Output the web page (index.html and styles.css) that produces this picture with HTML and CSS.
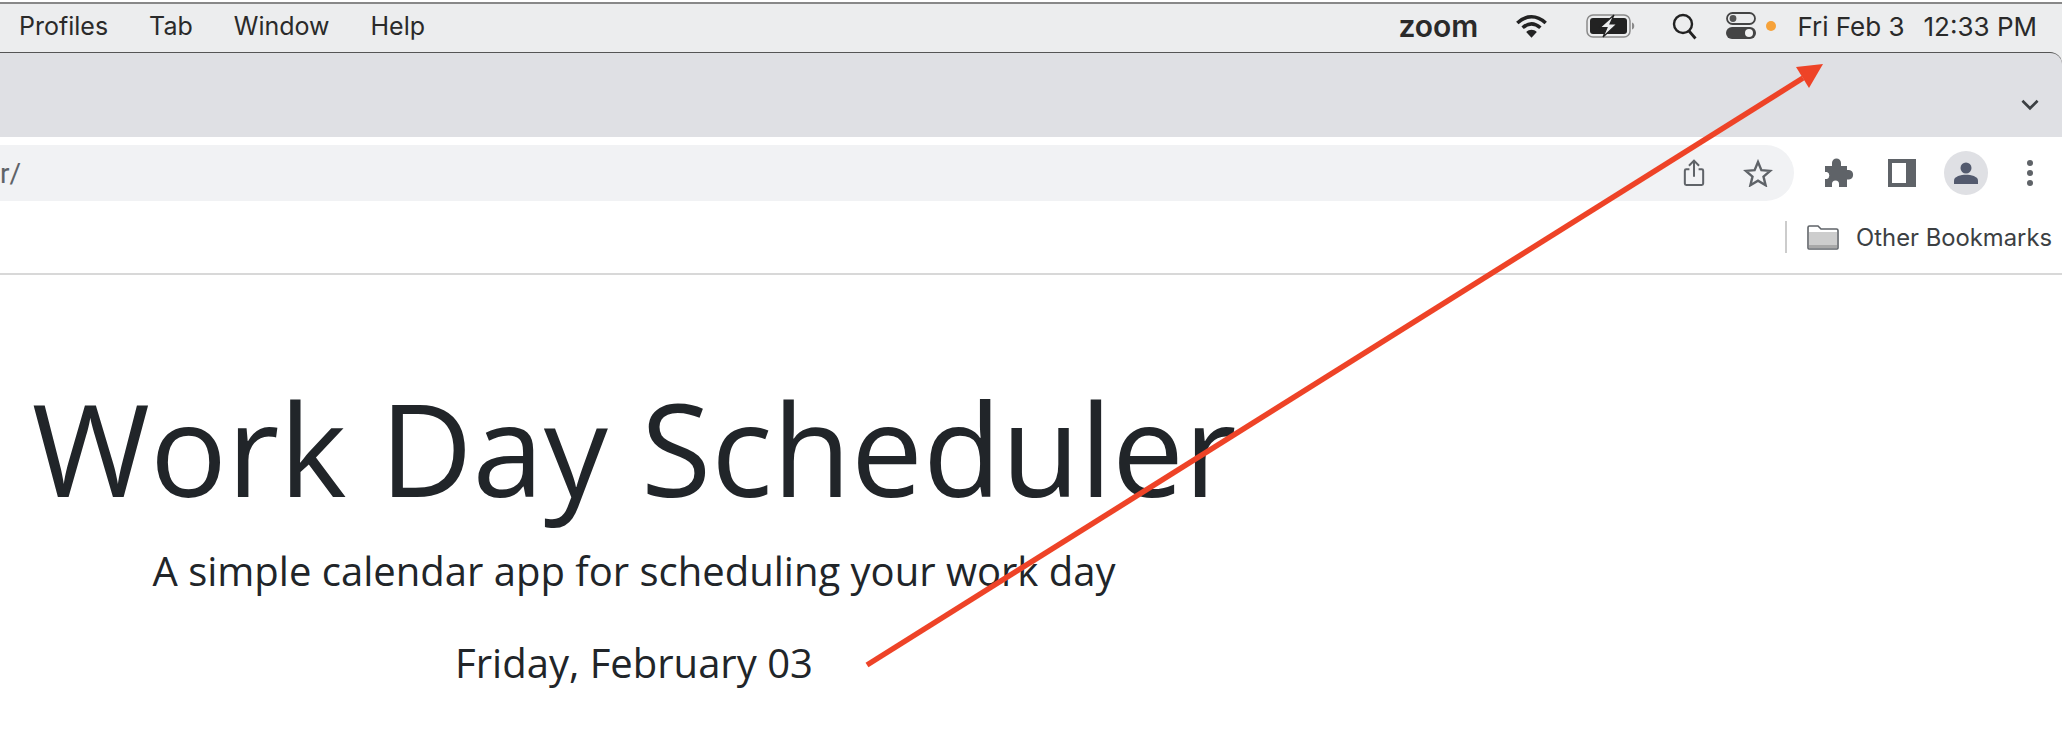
FILE: index.html
```html
<!DOCTYPE html>
<html lang="en">

<head>
    <meta charset="UTF-8">
    <title>Work Day Scheduler</title>
    <link rel="stylesheet" href="styles.css">
</head>

<body>
    <div class="menu-bar">
        <div class="menu-items">
            <span>Profiles</span>
            <span>Tab</span>
            <span>Window</span>
            <span>Help</span>
        </div>
        <div class="status-items">
            <span class="zoom-mark">zoom</span>
            <svg class="wifi" width="35" height="26" viewBox="0 0 28 22">
                <path d="M2 8.500C9.500 1.500 18.500 1.500 26 8.500M6.500 12.500C11.500 8 16.500 8 21.500 12.500" fill="none" stroke="#222" stroke-width="3" />
                <path d="M14 21L9.500 16C12 13.700 16 13.700 18.500 16Z" fill="#222" />
            </svg>
            <svg class="battery" width="50" height="24" viewBox="0 0 50 24">
                <rect x="1" y="1" width="43" height="22" rx="6" fill="none" stroke="#8a8a8a" stroke-width="1.500" />
                <rect x="4" y="4" width="37" height="16" rx="3" fill="#222" />
                <path d="M46 8.500C49 9 49 15 46 15.500Z" fill="#8a8a8a" />
                <path d="M28 1L14 13.500H21L17 23L31 10H24Z" fill="#ecedee" stroke="#222" stroke-width="1.200" />
            </svg>
            <svg class="search" width="25" height="27" viewBox="0 0 25 27">
                <circle cx="11" cy="11" r="9" fill="none" stroke="#222" stroke-width="2.400" />
                <path d="M17 18L23.500 25.500" stroke="#222" stroke-width="2.800" fill="none" />
            </svg>
            <svg class="control" width="30" height="28" viewBox="0 0 30 28">
                <rect x="1" y="1" width="28" height="11" rx="5.500" fill="none" stroke="#444" stroke-width="1.800" />
                <circle cx="7" cy="6.500" r="3.400" fill="#555" />
                <rect y="15" width="30" height="12" rx="6" fill="#444" />
                <circle cx="23" cy="21" r="4" fill="#f2f2f2" />
            </svg>
            <span class="dot"></span>
            <span class="clock-date">Fri Feb 3</span>
            <span class="clock-time">12:33 PM</span>
        </div>
    </div>

    <div class="tab-backdrop">
        <div class="tab-strip">
            <svg width="22" height="13" viewBox="0 0 20 12">
                <path d="M3 2.500L10 9.500L17 2.500" fill="none" stroke="#3c4043" stroke-width="2.400" />
            </svg>
        </div>
    </div>

    <div class="toolbar">
        <div class="address-bar">
            <span class="url">r/</span>
            <svg class="share" width="22" height="28" viewBox="0 0 24 30">
                <path d="M7 11H3.500Q2 11 2 12.500V26.500Q2 28 3.500 28H20.500Q22 28 22 26.500V12.500Q22 11 20.500 11H17" fill="none" stroke="#5f6368" stroke-width="2.200" />
                <path d="M12 19V2M6.500 7L12 1.500L17.500 7" fill="none" stroke="#5f6368" stroke-width="2.200" />
            </svg>
            <svg class="star" width="30" height="28" viewBox="0 0 30 28">
                <path d="M15 3L18.400 11.200L27.200 11.900L20.500 17.600L22.600 26.200L15 21.600L7.400 26.200L9.500 17.600L2.800 11.900L11.600 11.200Z" fill="none" stroke="#5f6368" stroke-width="2.400" />
            </svg>
        </div>
        <svg class="puzzle" width="30" height="30" viewBox="0 0 30 30">
            <path d="M1 8H8V5A4.500 4.500 0 0 1 17 5V8H23V12H25A4.800 4.800 0 0 1 25 21.500H23V29H15V26A3.500 3.500 0 0 0 8 26V29H1V21H3A3.800 3.800 0 0 0 3 14H1Z" fill="#5f6368" />
        </svg>
        <span class="side-panel"></span>
        <span class="avatar">
            <svg width="26" height="24" viewBox="0 0 26 24">
                <circle cx="13" cy="7" r="5.500" fill="#535a6e" />
                <path d="M1 23V19.500C1 15.500 8 13.800 13 13.800C18 13.800 25 15.500 25 19.500V23Z" fill="#535a6e" />
            </svg>
        </span>
        <span class="more-menu"><i></i><i></i><i></i></span>
    </div>

    <div class="bookmarks-bar">
        <span class="bookmarks-divider"></span>
        <svg class="folder" width="32" height="25" viewBox="0 0 32 25">
            <path d="M1 23V2.500Q1 1 2.500 1H11L14 4H29.500Q31 4 31 5.500V23Q31 24 30 24H2Q1 24 1 23Z" fill="#fff" stroke="#5f6368" stroke-width="1.600" />
            <rect x="2" y="7" width="28" height="13" fill="#cdcdcd" />
            <rect x="2" y="20" width="28" height="3" fill="#a8a8a8" />
        </svg>
        <span class="bookmarks-label">Other Bookmarks</span>
    </div>

    <header class="jumbotron">
        <h1>Work Day Scheduler</h1>
        <p class="lead">A simple calendar app for scheduling your work day</p>
        <p class="current-day">Friday, February 03</p>
    </header>

    <svg class="arrow" width="2062" height="742" viewBox="0 0 2062 742">
        <path d="M867 665L1803 78" stroke="#ee4327" stroke-width="5.500" fill="none" />
        <path d="M1823 64L1796 67L1809 88Z" fill="#ee4327" />
    </svg>
</body>

</html>
```

FILE: styles.css
```css
body {
    margin: 0;
    height: 742px;
    overflow: hidden;
    position: relative;
    background-color: #fff;
    font-family: "Open Sans", sans-serif;
    color: #212529;
}

.menu-bar {
    display: flex;
    justify-content: space-between;
    align-items: center;
    height: 44px;
    margin-top: 2px;
    padding: 0 25px 4px 19px;
    background-color: #ecedee;
    border-top: 2px solid #888;
    font-family: Inter, sans-serif;
    font-size: 25px;
    color: #2a2a2a;
}

.menu-items {
    display: flex;
    gap: 41px;
}

.status-items {
    display: flex;
    align-items: center;
}

.zoom-mark {
    font-weight: 600;
    font-size: 30px;
    line-height: 1;
    margin-right: 36px;
}

.battery {
    margin-left: 37px;
}

.search {
    margin-left: 36px;
}

.control {
    margin-left: 29px;
}

.dot {
    width: 10px;
    height: 10px;
    margin-left: 10px;
    border-radius: 50%;
    background-color: #f6a23a;
}

.clock-date {
    margin-left: 21px;
    font-size: 26px;
}

.clock-time {
    margin-left: 19px;
    font-size: 26px;
}

.tab-backdrop {
    background-color: #ecedee;
}

.tab-strip {
    display: flex;
    justify-content: flex-end;
    align-items: center;
    height: 85px;
    box-sizing: border-box;
    padding-right: 21px;
    background-color: #dfe0e4;
    border-top: 1px solid #555;
    border-top-right-radius: 12px;
}

.tab-strip svg {
    margin-top: 19px;
}

.toolbar {
    display: flex;
    align-items: center;
    height: 72px;
}

.address-bar {
    display: flex;
    align-items: center;
    width: 1794px;
    height: 56px;
    box-sizing: border-box;
    padding-right: 21px;
    background-color: #f1f2f4;
    border-radius: 0 28px 28px 0;
}

.url {
    flex: 1;
    font-family: Roboto, sans-serif;
    font-size: 28px;
    color: #5f6368;
}

.share {
    margin-right: 38px;
}

.puzzle {
    margin-left: 30px;
}

.side-panel {
    width: 28px;
    height: 28px;
    margin-left: 34px;
    box-sizing: border-box;
    border: 4px solid #5f6368;
    border-right-width: 10px;
}

.avatar {
    display: flex;
    align-items: center;
    justify-content: center;
    width: 44px;
    height: 44px;
    margin-left: 28px;
    border-radius: 50%;
    background-color: #dfe0e4;
}

.more-menu {
    display: flex;
    flex-direction: column;
    gap: 4px;
    margin-left: 39px;
}

.more-menu i {
    width: 6px;
    height: 6px;
    border-radius: 50%;
    background-color: #5f6368;
}

.bookmarks-bar {
    display: flex;
    justify-content: flex-end;
    align-items: center;
    height: 56px;
    padding: 0 10px 8px 0;
    border-bottom: 2px solid #d8d8d8;
    color: #3c4043;
}

.bookmarks-divider {
    width: 2px;
    height: 32px;
    margin-right: 20px;
    background-color: #ccc;
}

.bookmarks-label {
    margin-left: 17px;
    font-family: Inter, sans-serif;
    font-size: 23.800px;
}

.jumbotron {
    width: 1268px;
    padding-top: 96px;
    text-align: center;
}

h1 {
    margin: 0;
    font-size: 128px;
    font-weight: 400;
    line-height: 1.200;
}

.lead {
    margin: 16px 0 0;
    font-size: 40px;
    font-weight: 400;
    line-height: 1.500;
}

.current-day {
    margin: 32px 0 0;
    font-size: 40px;
    line-height: 1.500;
}

.arrow {
    position: absolute;
    left: 0;
    top: 0;
    pointer-events: none;
}
```
